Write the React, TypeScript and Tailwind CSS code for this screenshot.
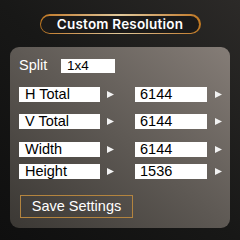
import React from 'react';

function Arrow() {
  return (
    <svg width="7" height="7" viewBox="0 0 7 7" className="shrink-0">
      <path d="M0 0 L7 3.5 L0 7 Z" fill="#f2f2f2" />
    </svg>
  );
}

const rows = [
  { label: 'H Total', value: '6144' },
  { label: 'V Total', value: '6144' },
  { label: 'Width', value: '6144' },
  { label: 'Height', value: '1536' },
];

export default function App() {
  return (
    <div
      className="w-[240px] h-[240px] flex flex-col items-center bg-gradient-to-bl from-[#2c2a28] via-[#181817] to-[#0f0f0f]"
      style={{ fontFamily: '"Liberation Sans", Arial, sans-serif' }}
    >
      {/* Title */}
      <div className="mt-[14px] rounded-full p-[1.5px] bg-gradient-to-r from-[#c07820] via-[#e0c89a] to-[#c07820]">
        <div className="h-[17px] w-[158px] rounded-full bg-[#1b1a19] flex items-center justify-center">
          <span
            className="text-white text-[13.5px] font-semibold tracking-[0.2px]"
            style={{ fontFamily: 'Inter, "Open Sans", sans-serif' }}
          >
            Custom Resolution
          </span>
        </div>
      </div>

      {/* Panel */}
      <div className="mt-[13px] w-[220px] h-[181px] rounded-[9px] bg-gradient-to-bl from-[#857d77] via-[#5e5954] to-[#3b3834] pl-[9px] pt-[11px] flex flex-col">
        <div className="flex items-center h-[15px]">
          <span className="w-[42px] text-[14.5px] text-white leading-none">Split</span>
          <div className="w-[54px] h-[14px] bg-white flex items-center pl-[6px] text-[13.5px] text-black leading-none">
            1x4
          </div>
        </div>

        <div className="mt-[14px] flex flex-col">
          {rows.map((r, i) => (
            <div
              key={r.label}
              className={`flex items-center h-[15px] ${i === 1 ? 'mt-[12px]' : i === 2 ? 'mt-[13px]' : i === 3 ? 'mt-[7px]' : ''}`}
            >
              <div className="w-[81px] h-[15px] bg-white flex items-center pl-[6px] text-[14.5px] text-black leading-none">
                {r.label}
              </div>
              <div className="ml-[7px] w-[28px]">
                <Arrow />
              </div>
              <div className="w-[72px] h-[15px] bg-white flex items-center pl-[5px] text-[14.5px] text-black leading-none">
                {r.value}
              </div>
              <div className="ml-[8px]">
                <Arrow />
              </div>
            </div>
          ))}
        </div>

        <button className="mt-[16px] ml-[1px] w-[113px] h-[23px] border border-[#b3843f] flex items-center justify-center text-[14.5px] text-white leading-none">
          Save Settings
        </button>
      </div>
    </div>
  );
}
